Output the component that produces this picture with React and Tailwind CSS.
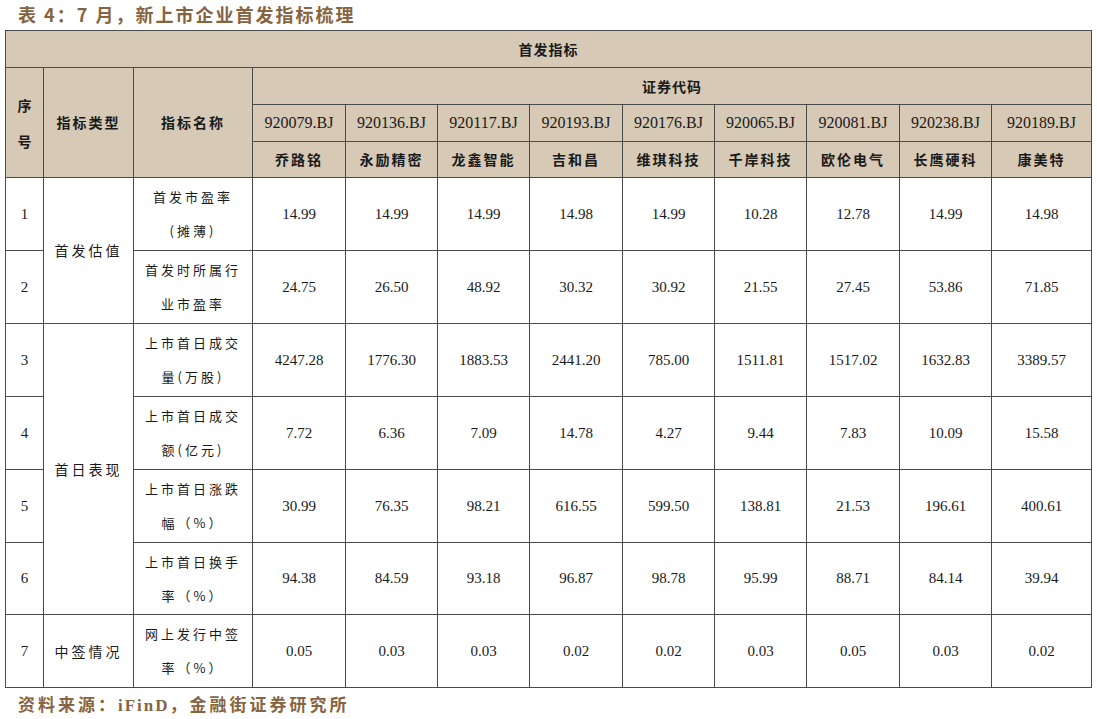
import React from 'react';

const codes = ['920079.BJ', '920136.BJ', '920117.BJ', '920193.BJ', '920176.BJ', '920065.BJ', '920081.BJ', '920238.BJ', '920189.BJ'];
const names = ['乔路铭', '永励精密', '龙鑫智能', '吉和昌', '维琪科技', '千岸科技', '欧伦电气', '长鹰硬科', '康美特'];
const colWidths = [38, 90, 119, 93, 92, 92, 93, 92, 92, 93, 92, 100];

const rows = [
  { no: '1', name: ['首发市盈率', '(摊薄)'], h: 'h-[73px]', vals: ['14.99', '14.99', '14.99', '14.98', '14.99', '10.28', '12.78', '14.99', '14.98'] },
  { no: '2', name: ['首发时所属行', '业市盈率'], h: 'h-[73px]', vals: ['24.75', '26.50', '48.92', '30.32', '30.92', '21.55', '27.45', '53.86', '71.85'] },
  { no: '3', name: ['上市首日成交', '量(万股)'], h: 'h-[73px]', vals: ['4247.28', '1776.30', '1883.53', '2441.20', '785.00', '1511.81', '1517.02', '1632.83', '3389.57'] },
  { no: '4', name: ['上市首日成交', '额(亿元)'], h: 'h-[73px]', vals: ['7.72', '6.36', '7.09', '14.78', '4.27', '9.44', '7.83', '10.09', '15.58'] },
  { no: '5', name: ['上市首日涨跌', '幅（%）'], h: 'h-[73px]', vals: ['30.99', '76.35', '98.21', '616.55', '599.50', '138.81', '21.53', '196.61', '400.61'] },
  { no: '6', name: ['上市首日换手', '率（%）'], h: 'h-[72px]', vals: ['94.38', '84.59', '93.18', '96.87', '98.78', '95.99', '88.71', '84.14', '39.94'] },
  { no: '7', name: ['网上发行中签', '率（%）'], h: 'h-[73px]', vals: ['0.05', '0.03', '0.03', '0.02', '0.02', '0.03', '0.05', '0.03', '0.02'] },
];

const groups = { 0: { label: '首发估值', span: 2 }, 2: { label: '首日表现', span: 4 }, 6: { label: '中签情况', span: 1 } };

const cjk = "font-['Noto_Sans_CJK_SC',sans-serif]";
const num = "font-['Liberation_Serif','Noto_Sans_CJK_SC',serif]";
const cell = 'border border-[#4a4a4a] text-center align-middle p-0';

export default function App() {
  return (
    <div className="w-[1097px] h-[719px] bg-white text-[#1a1a1a] overflow-hidden">
      <div className={`pl-[18px] pt-[3px] h-[30px] text-[18px] leading-[22px] font-bold tracking-[2px] text-[#86643f] ${cjk}`}>
        表 4：7 月，新上市企业首发指标梳理
      </div>
      <table className="ml-[5px] border-collapse table-fixed" style={{ width: 1086 }}>
        <colgroup>
          {colWidths.map((w, i) => (
            <col key={i} style={{ width: w }} />
          ))}
        </colgroup>
        <thead className="bg-[#d6c9b5]">
          <tr className="h-[37px]">
            <th colSpan={12} className={`${cell} text-[14px] font-bold tracking-[1px] ${cjk}`}>首发指标</th>
          </tr>
          <tr className="h-[37px]">
            <th rowSpan={3} className={`${cell} text-[14px] leading-[36px] font-bold ${cjk}`}>
              序<br />号
            </th>
            <th rowSpan={3} className={`${cell} text-[14px] font-bold tracking-[2px] ${cjk}`}>指标类型</th>
            <th rowSpan={3} className={`${cell} text-[14px] font-bold tracking-[2px] ${cjk}`}>指标名称</th>
            <th colSpan={9} className={`${cell} text-[14px] font-bold tracking-[1px] ${cjk}`}>证券代码</th>
          </tr>
          <tr className="h-[37px]">
            {codes.map((c) => (
              <th key={c} className={`${cell} text-[16px] font-normal ${num}`}>{c}</th>
            ))}
          </tr>
          <tr className="h-[36px]">
            {names.map((n) => (
              <th key={n} className={`${cell} text-[14px] font-bold tracking-[2px] ${cjk}`}>{n}</th>
            ))}
          </tr>
        </thead>
        <tbody>
          {rows.map((r, i) => (
            <tr key={r.no} className={r.h}>
              <td className={`${cell} text-[15px] ${num}`}>{r.no}</td>
              {groups[i] && (
                <td rowSpan={groups[i].span} className={`${cell} text-[14px] tracking-[3px] ${cjk}`}>
                  {groups[i].label}
                </td>
              )}
              <td className={`${cell} text-[13px] leading-[34px] tracking-[3px] ${cjk}`}>
                {r.name[0]}
                <br />
                {r.name[1]}
              </td>
              {r.vals.map((v, j) => (
                <td key={j} className={`${cell} text-[15px] ${num}`}>{v}</td>
              ))}
            </tr>
          ))}
        </tbody>
      </table>
      <div className={`pl-[18px] pt-[5px] text-[17px] leading-[22px] font-bold tracking-[3px] text-[#86643f] ${cjk}`}>
        资料来源：<span className={`${num} tracking-[2px]`}>iFinD</span>，金融街证券研究所
      </div>
    </div>
  );
}
